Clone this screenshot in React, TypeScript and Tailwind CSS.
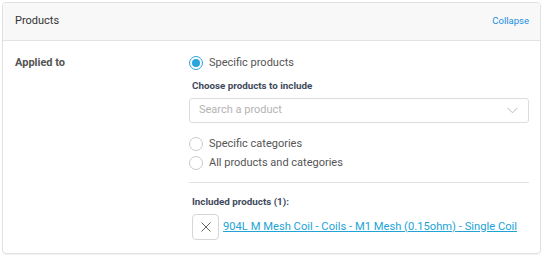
import React from "react";

const Radio = ({ checked, label }: { checked?: boolean; label: string }) => (
  <label className="flex items-center gap-[6px] h-[19px]">
    <span
      className={`w-[14px] h-[14px] rounded-full border flex items-center justify-center bg-white ${checked ? "border-[#2aa4dc]" : "border-[#c9c9c9]"}`}
    >
      {checked && <span className="w-[8px] h-[8px] rounded-full bg-[#2aa4dc]" />}
    </span>
    <span className="text-[11px] leading-[19px] text-[#555]">{label}</span>
  </label>
);

export default function App() {
  return (
    <div className="w-[544px] h-[257px] bg-white p-[2px] pr-[3px] font-['Roboto',sans-serif]">
      <div className="h-[252px] border border-[#e0e0e0] rounded-[4px] overflow-hidden shadow-[0_1px_1px_rgba(0,0,0,0.05)]">
        {/* Header */}
        <div className="h-[38px] bg-[#f8f8f8] border-b border-[#e2e2e2] flex items-center justify-between pl-[12px] pr-[11px]">
          <span className="text-[11px] text-[#333]">Products</span>
          <button className="text-[9.5px] text-[#1a8fe0]">Collapse</button>
        </div>

        {/* Body */}
        <div className="flex pl-[12px] pr-[11px] pt-[12px]">
          <div className="w-[174px] text-[11px] font-bold text-[#555] leading-[19px]">Applied to</div>
          <div className="flex-1">
            <Radio checked label="Specific products" />
            <div className="mt-[7px] pl-[3px] text-[9.8px] font-bold text-[#3e4a5d] leading-[13px]">
              Choose products to include
            </div>
            <div className="mt-[6px] h-[25px] border border-[#dcdcdc] rounded-[3px] flex items-center justify-between pl-[9px] pr-[10px]">
              <span className="text-[11px] text-[#b3b3b3]">Search a product</span>
              <svg width="11" height="7" viewBox="0 0 11 7" fill="none">
                <path d="M0.5 0.8 L5.5 5.8 L10.5 0.8" stroke="#b8b8b8" strokeWidth="1" />
              </svg>
            </div>
            <div className="mt-[11px] flex flex-col">
              <Radio label="Specific categories" />
              <Radio label="All products and categories" />
            </div>
            <div className="mt-[10px] border-t border-[#e2e2e2]" />
            <div className="mt-[12px] pl-[3px] text-[9.8px] font-bold text-[#3e4a5d] leading-[13px]">
              Included products (1):
            </div>
            <div className="mt-[6px] pl-[3px] flex items-center gap-[4px]">
              <button className="w-[27px] h-[26px] border border-[#d6d6d6] rounded-[4px] flex items-center justify-center">
                <svg width="10" height="10" viewBox="0 0 10 10">
                  <path d="M0.5 0.5 L9.5 9.5 M9.5 0.5 L0.5 9.5" stroke="#666" strokeWidth="1" />
                </svg>
              </button>
              <a href="#" className="text-[11.2px] text-[#22a3d6] underline">
                904L M Mesh Coil - Coils - M1 Mesh (0.15ohm) - Single Coil
              </a>
            </div>
          </div>
        </div>
      </div>
    </div>
  );
}
